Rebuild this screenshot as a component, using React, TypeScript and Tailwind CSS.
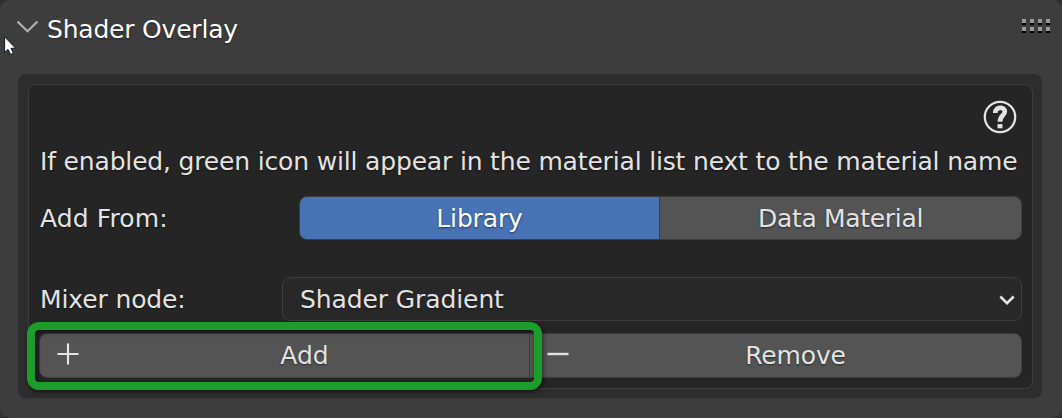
import type { ReactNode } from "react";

function Label({ children, className = "" }: { children: ReactNode; className?: string }) {
  return (
    <span
      className={`whitespace-nowrap text-[25px] leading-[30px] [text-shadow:0_1px_2px_rgba(0,0,0,0.5)] ${className}`}
    >
      {children}
    </span>
  );
}

function Header() {
  return (
    <header className="relative flex h-[74px] items-start pl-[17px] pr-[12px] text-white">
      <svg className="mt-[20px] h-[14px] w-[21px]" viewBox="0 0 21 14" fill="none">
        <path d="M.5 1.5 L10.5 11.3 L20.5 1.5" stroke="#b0b0b0" strokeWidth="2.2" />
      </svg>
      <Label className="ml-[9px] mt-[15px] tracking-[-0.2px]">Shader Overlay</Label>
      <div className="ml-auto mt-[19px] grid grid-cols-4 gap-x-[4px] gap-y-[2px]">
        {[0, 1, 2, 3, 4, 5, 6, 7].map((i) => (
          <i key={i} className="block h-[6px] w-[4px] border-b-2 border-black bg-[#999999]" />
        ))}
      </div>
      <svg className="absolute left-[4px] top-[36px] h-[20px] w-[13px]" viewBox="0 0 13 20">
        <path
          d="M.6 .8 V16.4 L4 13.4 L6.6 18.4 L9.4 17.2 L7.1 12.3 H11.7 Z"
          fill="white"
          stroke="#11142a"
          strokeWidth="1"
        />
      </svg>
    </header>
  );
}

function HelpIcon() {
  return (
    <svg className="h-[34px] w-[34px]" viewBox="0 0 34 34" fill="none" stroke="#e3e3e3">
      <circle cx="17" cy="17" r="15.2" strokeWidth="2.3" />
      <path
        d="M12.2 12.9 C12.2 6.3 21.8 6.3 21.8 11.6 C21.8 15.8 17 15.3 17 21.8"
        strokeWidth="4.7"
      />
      <path d="M14.5 26.2 H19.5" strokeWidth="4.2" />
    </svg>
  );
}

export default function App() {
  return (
    <div className="h-[418px] w-[1062px] overflow-hidden bg-[#303030] font-['DejaVu_Sans',sans-serif] text-[#e3e3e3]">
      <div className="h-full rounded-[10px] bg-[#3d3d3d]">
        <Header />
        <section className="ml-[18px] mr-[20px] h-[325px] rounded-[8px] border-b border-[#383838] bg-[#2d2d2d] pl-[10px] pr-[9px] pt-[10px]">
          <div className="relative flex h-[305px] flex-col rounded-[8px] border border-[#3d3d3d] bg-[#252525] pl-[10px] pr-[10px]">
            <div className="flex h-[62px] justify-end pr-[5px] pt-[15px]">
              <HelpIcon />
            </div>
            <div className="flex h-[49px] pl-px">
              <Label className="tracking-[-0.168px]">
                If enabled, green icon will appear in the material list next to the material name
              </Label>
            </div>
            <div className="flex h-[81px]">
              <Label className="w-[260px] pl-px pt-[8px] tracking-[0.12px]">Add From:</Label>
              <div className="flex h-[44px] flex-1 overflow-hidden rounded-[8px] border border-[#3d3d3d] bg-[#545454]">
                <button className="flex w-[360px] items-center justify-center border-r border-[#3d3d3d] bg-[#4772b3] pt-[2px] text-white">
                  <Label className="tracking-[-0.14px]">Library</Label>
                </button>
                <button className="flex flex-1 items-center justify-center pt-[2px]">
                  <Label className="tracking-[-0.32px]">Data Material</Label>
                </button>
              </div>
            </div>
            <div className="flex h-[56px]">
              <Label className="w-[243px] pl-px pt-[8px] tracking-[-0.12px]">Mixer node:</Label>
              <button className="flex h-[44px] flex-1 items-center justify-between rounded-[8px] border border-[#3d3d3d] bg-[#282828] pl-[17px] pr-[6px]">
                <Label className="pt-[2px] tracking-[-0.1px]">Shader Gradient</Label>
                <svg className="mt-px h-[12px] w-[16px]" viewBox="0 0 16 12" fill="none">
                  <path d="M1.3 2.5 L8 9.1 L14.7 2.5" stroke="#e3e3e3" strokeWidth="2.6" />
                </svg>
              </button>
            </div>
            <div className="flex h-[45px] rounded-[8px] border border-[#3d3d3d] bg-[#545454]">
              <button className="relative flex w-[490px] items-center justify-center border-r border-[#3d3d3d] pl-[40px]">
                <svg className="absolute left-[17px] top-[9px] h-[22px] w-[22px]" viewBox="0 0 22 22">
                  <path d="M.5 11 H21.5 M11 .5 V21.5" stroke="#e3e3e3" strokeWidth="2.2" />
                </svg>
                <Label>Add</Label>
              </button>
              <button className="relative flex flex-1 items-center justify-center pl-[40px]">
                <svg className="absolute left-[17px] top-[9px] h-[22px] w-[22px]" viewBox="0 0 22 22">
                  <path d="M.5 11 H21.5" stroke="#e3e3e3" strokeWidth="2.4" />
                </svg>
                <Label className="tracking-[-0.15px]">Remove</Label>
              </button>
            </div>
            <div className="pointer-events-none absolute left-[-2px] top-[237px] h-[68px] w-[515px] rounded-[12px] border-8 border-[#1b9c2b] [box-shadow:1px_2px_5px_rgba(0,0,0,0.55),inset_1px_2px_5px_rgba(0,0,0,0.5)]" />
          </div>
        </section>
      </div>
    </div>
  );
}
